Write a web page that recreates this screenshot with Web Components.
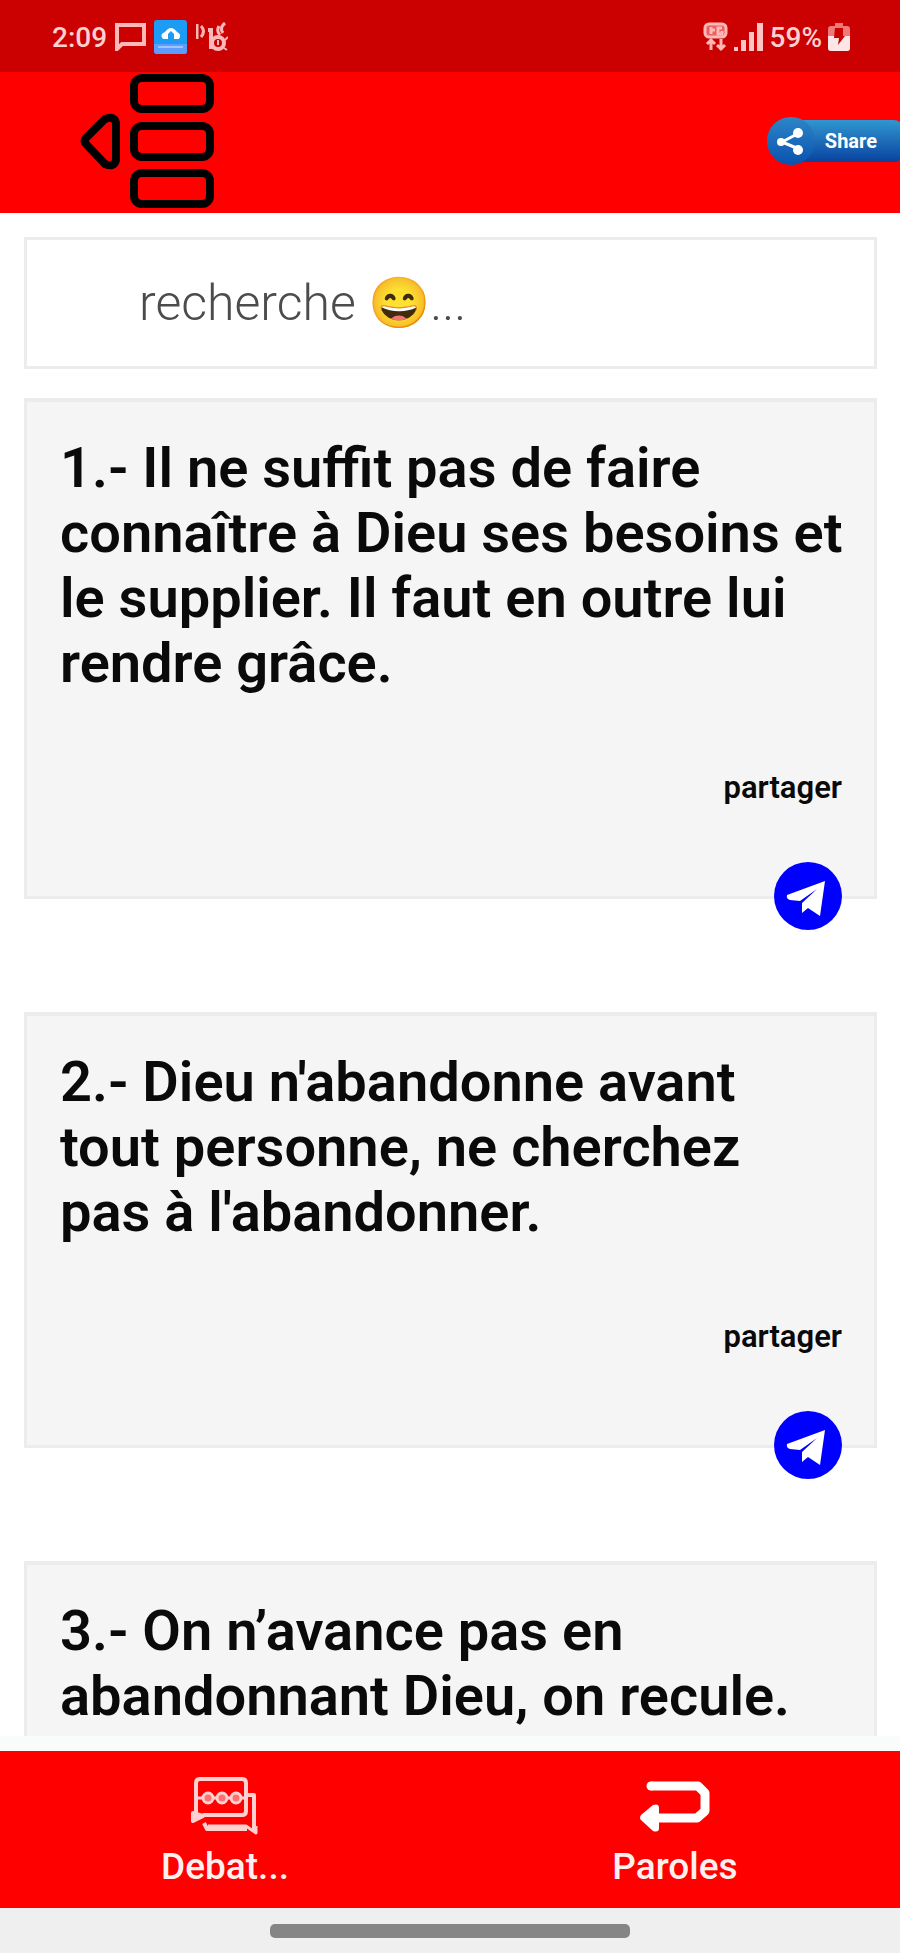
<!DOCTYPE html>
<html lang="fr">
<head>
<meta charset="utf-8">
<meta name="viewport" content="width=device-width, initial-scale=1">
<title>Paroles</title>
<style>
    body {
        margin: 0;
        font-family: Roboto, "Liberation Sans", sans-serif;
        background: #fff;
    }
</style>
</head>
<body>
<app-screen>
    <status-bar slot="top" time="2:09" battery="59%"></status-bar>
    <app-header slot="top"></app-header>
    <search-box placeholder="recherche 😄..."></search-box>
    <quote-card share>1.- Il ne suffit pas de faire connaître à Dieu ses besoins et le supplier. Il faut en outre lui rendre grâce.</quote-card>
    <quote-card share>2.- Dieu n'abandonne avant tout personne, ne cherchez pas&nbsp;à l'abandonner.</quote-card>
    <quote-card>3.- On n’avance pas en abandonnant Dieu, on recule.</quote-card>
    <tab-bar slot="bottom">
        <tab-item href="#debat" label="Debat...">
            <svg width="70" height="58" viewBox="0 0 70 58" fill="none" stroke="#ffd0d0" stroke-width="4" stroke-linejoin="round" aria-hidden="true">
                <path d="M10 2h42q4 0 4 4v28q0 4-4 4H14L3 43l3-7V6q0-4 4-4z"/>
                <path d="M3 44V36l10 3z" fill="#ffd0d0"/>
                <path d="M57 18h7v35M14 46l3 6h40" stroke-width="4"/>
                <path d="M18 49h38l10 7V49" stroke-width="3"/>
                <path d="M8 21h48" stroke-width="3"/>
                <g fill="#ff7070" stroke-width="3"><circle cx="18" cy="21" r="5"/><circle cx="32" cy="21" r="5"/><circle cx="46" cy="21" r="5"/></g>
            </svg>
        </tab-item>
        <tab-item href="#paroles" label="Paroles">
            <svg width="70" height="58" viewBox="0 0 70 58" fill="none" stroke="#fff" stroke-width="9" stroke-linejoin="round" aria-hidden="true">
                <path d="M11 9h47l7 7v18l-8 7H16"/>
                <circle cx="11" cy="9" r="4.5" fill="#fff" stroke="none"/>
                <path d="M1 38L13 28q6-2 6 3v20q0 5-6 3L1 43q-2-2 0-5z" fill="#fff" stroke="none"/>
            </svg>
        </tab-item>
    </tab-bar>
    <home-handle slot="bottom"></home-handle>
</app-screen>

<script>
class AppScreen extends HTMLElement {
    constructor() {
        super();
        this.attachShadow({ mode: 'open' });

        this.shadowRoot.innerHTML = `
            <style>
                :host {
                    display: flex;
                    flex-direction: column;
                    height: 100vh;
                }

                main {
                    flex: 1;
                    min-height: 0;
                    box-sizing: border-box;
                    padding: 24px 23px 0 24px;
                    overflow-y: auto;
                    scrollbar-width: none;
                }

                footer {
                    border-top: 15px solid #fafcfc;
                }
            </style>
            <header><slot name="top"></slot></header>
            <main><slot></slot></main>
            <footer><slot name="bottom"></slot></footer>
        `;
    }
}
customElements.define('app-screen', AppScreen);

class StatusBar extends HTMLElement {
    constructor() {
        super();
        this.attachShadow({ mode: 'open' });

        this.shadowRoot.innerHTML = `
            <style>
                :host {
                    display: flex;
                    align-items: center;
                    justify-content: space-between;
                    height: 72px;
                    padding: 2px 50px 0 52px;
                    box-sizing: border-box;
                    background: #cb0000;
                    color: #ffd0d0;
                    font-size: 28px;
                    font-weight: 500;
                }

                .group {
                    display: flex;
                    align-items: center;
                    gap: 8px;
                }

                .right {
                    gap: 6px;
                }
            </style>
            <div class="group">
                <span>${this.getAttribute('time')}</span>
                <svg width="31" height="28" viewBox="0 0 31 28" fill="none" stroke="#ffb8b8" stroke-width="4" aria-hidden="true">
                    <path d="M2 26V2h27v19H7z"/>
                </svg>
                <svg width="34" height="34" viewBox="0 0 34 34" aria-hidden="true">
                    <rect width="33" height="34" rx="3" fill="#1d9cf5"/>
                    <path d="M0 24h33v7q0 3-3 3H3q-3 0-3-3z" fill="#5d9cff"/>
                    <path d="M9 19q-4-5 2-7 6-8 12 0 5 2 2 7h-5v-5l-3-3-3 3v5z" fill="#fff"/>
                    <path d="M4 27h25" stroke="#9cc4ff" stroke-width="2"/>
                </svg>
                <svg width="32" height="30" viewBox="0 0 32 30" fill="none" stroke="#ffb8b8" stroke-width="3" aria-hidden="true">
                    <path d="M1 2v15M5 4q5 5 0 11M29 1q-6 5-2 10M23 4q-3 5 1 9"/>
                    <path d="M15 8v19M12 8h5" stroke-width="4"/>
                    <circle cx="22" cy="21" r="6" fill="#cb0000" stroke-width="4"/>
                    <path d="M22 18v5M29 18l3-3M28 26l3 2" stroke-width="2"/>
                </svg>
            </div>
            <div class="group right">
                <svg width="25" height="30" viewBox="0 0 25 30" fill="none" stroke="#ffb8b8" stroke-width="3" aria-hidden="true">
                    <rect x="2" y="2" width="21" height="13" rx="4" fill="#e86060"/>
                    <path d="M8 5v7M8 8h4M19 6h-4v6h4V9"/>
                    <path d="M8 17v11M4 22l4-4 4 4M18 17v11M14 23l4 4 4-4"/>
                </svg>
                <svg width="30" height="30" viewBox="0 0 30 30" fill="#ffc4c4" aria-hidden="true">
                    <path d="M0 25h4v4H0zM7 18h5v11H7zM15 10h5v19h-5zM23 1h6v28h-6z"/>
                </svg>
                <span>${this.getAttribute('battery')}</span>
                <svg width="22" height="28" viewBox="0 0 22 28" aria-hidden="true">
                    <path d="M7 0h8v3h4q3 0 3 3v19q0 3-3 3H3q-3 0-3-3V6q0-3 3-3h4z" fill="#f07878"/>
                    <path d="M0 13h22v12q0 3-3 3H3q-3 0-3-3z" fill="#ffe6e6"/>
                    <path d="M7 5h8v8h2l-7 9 1-7H6z" fill="#cb0000"/>
                </svg>
            </div>
        `;
    }
}
customElements.define('status-bar', StatusBar);

class AppHeader extends HTMLElement {
    constructor() {
        super();
        this.attachShadow({ mode: 'open' });

        this.shadowRoot.innerHTML = `
            <style>
                :host {
                    display: flex;
                    align-items: center;
                    justify-content: space-between;
                    height: 141px;
                    box-sizing: border-box;
                    padding: 0 0 4px 80px;
                    background: #f00;
                    overflow: hidden;
                }

                button {
                    display: flex;
                    padding: 0;
                    border: 0;
                    background: none;
                    font-family: inherit;
                    cursor: pointer;
                }

                .share {
                    align-items: center;
                    gap: 10px;
                    height: 42px;
                    margin-right: -4px;
                    padding-right: 27px;
                    border-radius: 24px 12px 12px 24px;
                    background: linear-gradient(#3096d0, #0a43a0);
                    color: #fff;
                    font-size: 20px;
                    font-weight: 700;
                }

                .share svg {
                    margin: -3px 0;
                }
            </style>
            <button class="menu" aria-label="Menu">
                <svg width="134" height="136" viewBox="0 0 134 136" fill="none" stroke="#000" stroke-width="8" aria-hidden="true">
                    <path d="M25 46q9-4 11 4v37q-2 8-11 4L6 71q-3-3 0-6z"/>
                    <rect x="54" y="5" width="76" height="31" rx="8"/>
                    <rect x="54" y="53" width="76" height="31" rx="8"/>
                    <rect x="54" y="100" width="76" height="31" rx="8"/>
                </svg>
            </button>
            <button class="share">
                <svg width="48" height="48" viewBox="0 0 48 48" aria-hidden="true">
                    <defs><linearGradient id="disc" x2="0" y2="1"><stop stop-color="#2d86c8"/><stop offset="1" stop-color="#0a52ae"/></linearGradient></defs>
                    <circle cx="24" cy="24" r="24" fill="url(#disc)"/>
                    <path d="M32 16L15 25l17 7" fill="none" stroke="#fff" stroke-width="3"/>
                    <g fill="#fff"><circle cx="14" cy="25" r="4"/><circle cx="31" cy="16" r="5"/><circle cx="31" cy="33" r="5"/></g>
                </svg>
                Share
            </button>
        `;
    }
}
customElements.define('app-header', AppHeader);

class SearchBox extends HTMLElement {
    constructor() {
        super();
        this.attachShadow({ mode: 'open' });

        const text = this.getAttribute('placeholder');
        this.shadowRoot.innerHTML = `
            <style>
                :host {
                    display: block;
                    margin-bottom: 29px;
                }

                input {
                    display: block;
                    width: 100%;
                    height: 132px;
                    box-sizing: border-box;
                    padding: 0 112px;
                    border: 3px solid #ececec;
                    border-radius: 0;
                    background: #fff;
                    font-family: Roboto, "Noto Color Emoji", sans-serif;
                    font-size: 50px;
                    font-weight: 300;
                    outline: none;
                }

                input::placeholder {
                    color: #4c4c4c;
                    opacity: 1;
                }
            </style>
            <input type="search" aria-label="recherche" placeholder="${text}">
        `;
    }
}
customElements.define('search-box', SearchBox);

class QuoteCard extends HTMLElement {
    constructor() {
        super();
        this.attachShadow({ mode: 'open' });

        this.shadowRoot.innerHTML = `
            <style>
                :host {
                    display: block;
                    position: relative;
                    box-sizing: border-box;
                    min-height: 436px;
                    margin-bottom: 113px;
                    padding: 34px 28px 92px 33px;
                    border: 3px solid #ececec;
                    border-top-width: 4px;
                    background: #f5f5f5;
                    color: #0a0a0a;
                }

                p {
                    margin: 0;
                    font-size: 56px;
                    font-weight: 600;
                    line-height: 65px;
                }

                .caption {
                    display: block;
                    margin-top: 76px;
                    padding-right: 4px;
                    font-size: 31px;
                    font-weight: 600;
                    line-height: 32px;
                    text-align: right;
                }

                button {
                    position: absolute;
                    right: 32px;
                    bottom: -34px;
                    width: 68px;
                    height: 68px;
                    padding: 0;
                    border: 0;
                    border-radius: 50%;
                    background: #00f;
                    cursor: pointer;
                }

                svg {
                    display: block;
                }
            </style>
            <p><slot></slot></p>
            ${this.hasAttribute('share') ? this.shareMarkup() : ''}
        `;
    }

    shareMarkup() {
        return `
            <span class="caption" id="caption">partager</span>
            <button aria-labelledby="caption">
                <svg width="68" height="68" viewBox="0 0 68 68" aria-hidden="true">
                    <path d="M51 19L13 33q-1 4 3 5l10 1 17-12-15 14v10l6-5 12 8z" fill="#fff"/>
                </svg>
            </button>
        `;
    }
}
customElements.define('quote-card', QuoteCard);

class TabBar extends HTMLElement {
    constructor() {
        super();
        this.attachShadow({ mode: 'open' });

        this.shadowRoot.innerHTML = `
            <style>
                :host {
                    display: block;
                }

                nav {
                    display: grid;
                    grid-template-columns: 1fr 1fr;
                    height: 157px;
                    background: #f00;
                }
            </style>
            <nav><slot></slot></nav>
        `;
    }
}
customElements.define('tab-bar', TabBar);

class TabItem extends HTMLElement {
    constructor() {
        super();
        this.attachShadow({ mode: 'open' });

        this.shadowRoot.innerHTML = `
            <style>
                :host {
                    display: block;
                }

                a {
                    display: flex;
                    flex-direction: column;
                    align-items: center;
                    gap: 10px;
                    padding-top: 26px;
                    color: #fff0f0;
                    font-size: 37px;
                    font-weight: 500;
                    line-height: 44px;
                    text-decoration: none;
                }
            </style>
            <a href="${this.getAttribute('href')}"><slot></slot>${this.getAttribute('label')}</a>
        `;
    }
}
customElements.define('tab-item', TabItem);

class HomeHandle extends HTMLElement {
    constructor() {
        super();
        this.attachShadow({ mode: 'open' });

        this.shadowRoot.innerHTML = `
            <style>
                :host {
                    display: flex;
                    align-items: center;
                    justify-content: center;
                    height: 45px;
                    background: #efefef;
                }

                .handle {
                    width: 40%;
                    height: 14px;
                    border-radius: 5px;
                    background: #858585;
                }
            </style>
            <div class="handle"></div>
        `;
    }
}
customElements.define('home-handle', HomeHandle);
</script>
</body>
</html>
